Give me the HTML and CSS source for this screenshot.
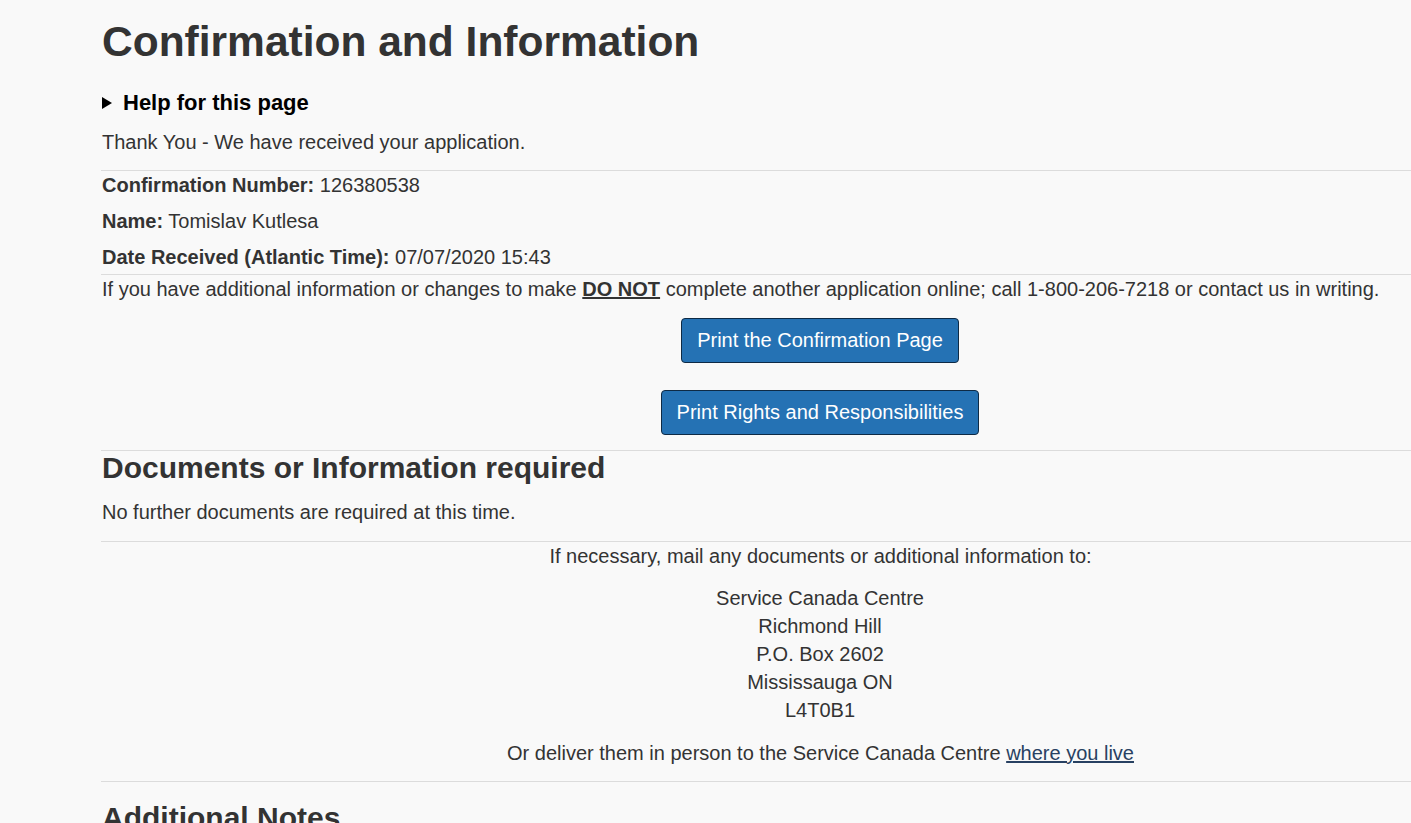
FILE: index.html
```html
<!DOCTYPE html>
<html lang="en">
<head>
<meta charset="utf-8">
<title>Confirmation and Information</title>
<link rel="stylesheet" href="styles.css">
</head>
<body>
<main class="page">
  <h1 class="title">Confirmation and Information</h1>
  <div class="help"><span class="tri"></span><span class="help-text">Help for this page</span></div>
  <p class="thanks">Thank You - We have received your application.</p>
  <hr class="rule rule-a">
  <p class="field"><strong>Confirmation Number:</strong> 126380538</p>
  <p class="field gap"><strong>Name:</strong> Tomislav Kutlesa</p>
  <p class="field gap"><strong>Date Received (Atlantic Time):</strong> 07/07/2020 15:43</p>
  <hr class="rule rule-b">
  <p class="field">If you have additional information or changes to make <strong class="u">DO NOT</strong> complete another application online; call 1-800-206-7218 or contact us in writing.</p>
  <div class="actions">
    <button class="btn" type="button">Print the Confirmation Page</button>
    <button class="btn" type="button">Print Rights and Responsibilities</button>
  </div>
  <hr class="rule rule-c">
  <h2 class="sub">Documents or Information required</h2>
  <p class="field nodocs">No further documents are required at this time.</p>
  <hr class="rule rule-d">
  <div class="mail">
    <p class="field">If necessary, mail any documents or additional information to:</p>
    <address class="addr">Service Canada Centre<br>Richmond Hill<br>P.O. Box 2602<br>Mississauga ON<br>L4T0B1</address>
    <p class="field">Or deliver them in person to the Service Canada Centre <a class="link" href="#">where you live</a></p>
  </div>
  <hr class="rule rule-e">
  <h2 class="sub notes">Additional Notes</h2>
</main>
</body>
</html>
```
FILE: styles.css
```css
html, body {
  margin: 0;
  padding: 0;
  overflow: hidden;
  background: #f9f9f9;
}
body {
  font-family: "Liberation Sans", Arial, Helvetica, sans-serif;
  color: #333;
  font-size: 20px;
  line-height: 28px;
  height: 823px;
}
.page {
  margin-left: 101px;
  width: 1438px;
  padding-top: 19px;
}
.title {
  font-size: 42.5px;
  line-height: 46px;
  font-weight: 700;
  margin: 0 0 24px 1px;
  color: #333;
}
.help {
  display: flex;
  align-items: center;
  margin: 0 0 11px 1px;
  color: #000;
  font-weight: 700;
  font-size: 22px;
}
.tri {
  width: 0;
  height: 0;
  border-left: 10px solid #000;
  border-top: 6px solid transparent;
  border-bottom: 6px solid transparent;
  margin-right: 11px;
}
.thanks {
  margin: 0 0 0 1px;
}
.field {
  margin: 0 0 0 1px;
}
.field.gap {
  margin-top: 8px;
}
.u {
  text-decoration: underline;
}
.rule {
  border: 0;
  border-top: 1px solid #dcdcdc;
  margin: 0;
  height: 0;
}
.rule-a { margin-top: 14px; }
.rule-b { margin-top: 3px; }
.rule-c { margin-top: 15px; }
.rule-d { margin-top: 15px; }
.rule-e { margin-top: 14px; }
.actions {
  display: flex;
  flex-direction: column;
  align-items: center;
  gap: 27px;
  margin-top: 15px;
}
.btn {
  font-family: "Liberation Sans", Arial, Helvetica, sans-serif;
  font-size: 20px;
  line-height: 29px;
  padding: 7px 15px;
  color: #fff;
  background: #2572b4;
  border: 1px solid #0e2a45;
  border-radius: 4px;
  cursor: pointer;
}
.sub {
  font-size: 30px;
  line-height: 33px;
  font-weight: 700;
  margin: 0 0 0 1px;
  color: #333;
}
.nodocs {
  margin-top: 14px;
}
.mail {
  text-align: center;
}
.addr {
  font-style: normal;
  margin: 14px 0 15px;
}
.link {
  color: #284162;
  text-decoration: underline;
}
.notes {
  margin-top: 19px;
}
```
